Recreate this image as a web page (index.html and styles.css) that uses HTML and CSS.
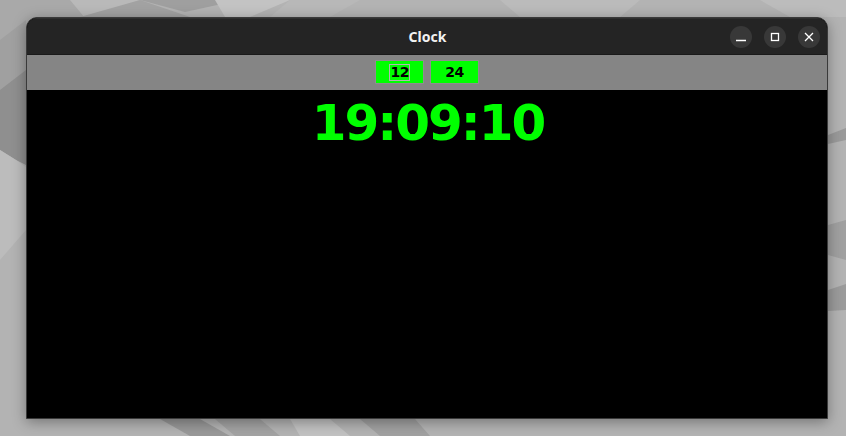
FILE: index.html
```html
<!DOCTYPE html>
<html>
<head>
<meta charset="utf-8">
<title>Clock</title>
<link rel="stylesheet" href="styles.css">
</head>
<body>
<div class="desktop">
  <svg class="wallpaper" width="846" height="436" viewBox="0 0 846 436">
    <rect width="846" height="436" fill="#b3b3b3"/>
    <polygon points="0,0 120,0 60,60 0,40" fill="#a9a9a9"/>
    <polygon points="70,0 140,0 85,18" fill="#b9b9b9"/>
    <polygon points="140,0 240,0 185,12" fill="#9f9f9f"/>
    <polygon points="80,17 140,0 190,17" fill="#a2a2a2"/>
    <polygon points="215,0 290,0 250,17 225,17" fill="#c3c3c3"/>
    <polygon points="290,0 360,0 330,17 270,17" fill="#b8b8b8"/>
    <polygon points="500,0 640,0 620,17 520,17" fill="#bbbbbb"/>
    <polygon points="0,60 26,40 26,165 16,160 0,150" fill="#8f8f8f"/>
    <polygon points="0,40 26,20 26,70 0,90" fill="#a0a0a0"/>
    <polygon points="0,150 16,160 26,167 26,230 0,260" fill="#bcbcbc"/>
    <polygon points="160,419 200,419 230,436 190,436" fill="#999999"/>
    <polygon points="215,419 260,419 280,436 235,436" fill="#a3a3a3"/>
    <polygon points="290,419 330,419 350,436 300,436" fill="#c2c2c2"/>
    <polygon points="360,419 400,419 385,436" fill="#a7a7a7"/>
    <polygon points="360,419 415,419 430,436 380,436" fill="#a1a1a1"/>
    <polygon points="828,135 846,128 846,140 828,144" fill="#9a9a9a"/>
    <polygon points="828,225 846,220 846,260 828,255" fill="#a0a0a0"/>
    <polygon points="828,290 846,284 846,310 828,311" fill="#9b9b9b"/>
    <polygon points="760,0 846,0 846,17 790,17" fill="#bcbcbc"/>
  </svg>
  <div class="window">
    <div class="titlebar">
      <span class="title">Clock</span>
      <div class="controls">
        <span class="ctl">
          <svg width="22" height="22" viewBox="0 0 22 22"><line x1="6" y1="14.5" x2="16" y2="14.5" stroke="#fff" stroke-width="1.3"/></svg>
        </span>
        <span class="ctl">
          <svg width="22" height="22" viewBox="0 0 22 22"><rect x="7.5" y="7.5" width="7" height="7" fill="none" stroke="#fff" stroke-width="1.3"/></svg>
        </span>
        <span class="ctl">
          <svg width="22" height="22" viewBox="0 0 22 22"><path d="M7 7 L15 15 M15 7 L7 15" stroke="#fff" stroke-width="1.3"/></svg>
        </span>
      </div>
    </div>
    <div class="toolbar">
      <div class="fmt"><div class="focus">12</div></div>
      <div class="fmt">24</div>
    </div>
    <div class="content">
      <div class="time">19:09:10</div>
    </div>
  </div>
</div>
</body>
</html>
```

FILE: styles.css
```css
html, body {
  margin: 0;
  padding: 0;
  width: 846px;
  height: 436px;
  overflow: hidden;
}
.desktop {
  position: relative;
  width: 846px;
  height: 436px;
  box-sizing: border-box;
  padding: 17px 0 0 26px;
}
.wallpaper {
  position: absolute;
  left: 0;
  top: 0;
}
.window {
  position: relative;
  width: 802px;
  height: 402px;
  box-sizing: border-box;
  border: 1px solid #3a3a3a;
  border-radius: 11px 11px 0 0;
  background: #000;
  display: flex;
  flex-direction: column;
  box-shadow: 0 3px 14px rgba(0, 0, 0, 0.35);
  overflow: hidden;
}
.titlebar {
  height: 37px;
  flex: none;
  background: #242424;
  border-top: 1px solid #2f2f2f;
  border-bottom: 1px solid #1a1a1a;
  box-sizing: border-box;
  display: flex;
  align-items: center;
  justify-content: center;
  position: relative;
}
.title {
  font-family: "Noto Sans", "DejaVu Sans", sans-serif;
  font-weight: bold;
  font-size: 14px;
  color: #f2f2f2;
  margin-left: 1px;
}
.controls {
  position: absolute;
  right: 7px;
  top: 7px;
  display: flex;
  gap: 12px;
}
.ctl {
  width: 22px;
  height: 22px;
  border-radius: 50%;
  background: #383838;
  display: block;
}
.ctl svg {
  display: block;
}
.toolbar {
  height: 35px;
  flex: none;
  background: #858585;
  display: flex;
  justify-content: center;
  align-items: flex-start;
  gap: 6px;
  padding-top: 5px;
  box-sizing: border-box;
}
.fmt {
  width: 49px;
  height: 24px;
  box-sizing: border-box;
  background: #00ff00;
  border: 1px solid #8e8e8e;
  font-family: "DejaVu Sans", sans-serif;
  font-weight: bold;
  font-size: 14px;
  letter-spacing: -0.5px;
  color: #000;
  display: flex;
  align-items: center;
  justify-content: center;
}
.focus {
  height: 17px;
  box-sizing: border-box;
  border: 1px solid #b4b4b4;
  line-height: 15px;
  padding: 0 0 0 0.5px;
  white-space: nowrap;
}
.content {
  flex: 1;
  background: #000;
}
.time {
  font-family: "DejaVu Sans", sans-serif;
  font-weight: bold;
  font-size: 50px;
  letter-spacing: -2px;
  line-height: 58px;
  padding-top: 4px;
  color: #00ff00;
  text-align: center;
  margin-left: 2px;
}
```
